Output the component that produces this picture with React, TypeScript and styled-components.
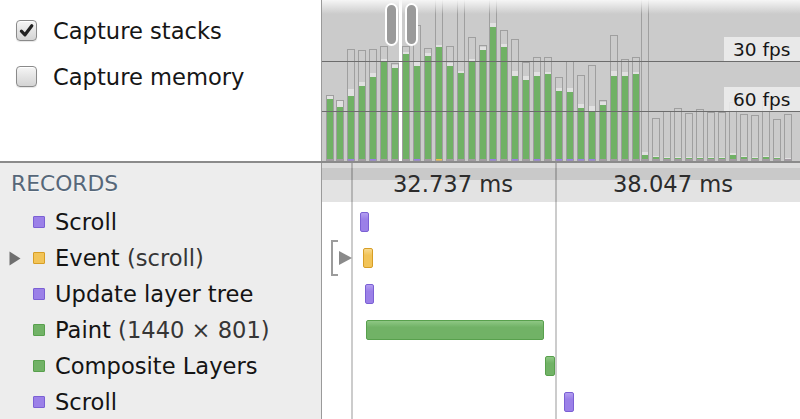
import React from "react";
import styled, { createGlobalStyle } from "styled-components";

const Global = createGlobalStyle`
  html, body { margin: 0; padding: 0; background: #fff; }
  body { font-family: "DejaVu Sans", "Noto Sans", sans-serif; overflow: hidden; }
  * { box-sizing: border-box; }
`;

const Root = styled.div`
  width: 800px;
  height: 419px;
  display: flex;
  flex-direction: column;
  overflow: hidden;
`;

const TopSection = styled.div`
  flex: none;
  height: 163px;
  display: flex;
  border-bottom: 2px solid #8b8b8b;
`;

const OptionsPanel = styled.div`
  width: 322px;
  flex: none;
  background: #fff;
  border-right: 1px solid #9a9a9a;
  padding: 7px 0 0 16px;
  display: flex;
  flex-direction: column;
`;

const OptionRow = styled.div`
  height: 46px;
  display: flex;
  align-items: center;
  gap: 16px;
  font-size: 22.6px;
  line-height: 26px;
  color: #161616;
`;

const OptionText = styled.span`
  padding-top: 2px;
`;

const CheckBox = styled.span<{ $checked?: boolean }>`
  width: 21px;
  height: 21px;
  border: 1px solid #8a8a8a;
  border-radius: 4px;
  background: linear-gradient(to bottom, #f6f6f6 0%, #e4e4e4 50%, #d4d4d4 100%);
  box-shadow: inset 0 1px 0 #fff, 0 1px 1px rgba(0, 0, 0, 0.1);
  display: flex;
  align-items: center;
  justify-content: center;
  flex: none;
`;

const Overview = styled.div`
  flex: 1;
  position: relative;
  background: #cbcbcb;
  overflow: hidden;
`;

const ChartSvg = styled.svg`
  display: block;
`;

const TopFade = styled.div`
  position: absolute;
  left: 0;
  right: 0;
  top: 0;
  height: 14px;
  background: linear-gradient(to bottom, rgba(248, 248, 248, 0.95), rgba(248, 248, 248, 0));
`;

const FpsLabel = styled.div<{ $top: number }>`
  position: absolute;
  right: 0;
  top: ${(p) => p.$top}px;
  width: 76px;
  height: 24px;
  padding: 2px 0 0 9px;
  background: rgba(238, 238, 238, 0.85);
  font-size: 18.5px;
  line-height: 22px;
  color: #161616;
`;

const Handle = styled.div<{ $left: number }>`
  position: absolute;
  top: 3px;
  left: ${(p) => p.$left}px;
  width: 13px;
  height: 43px;
  background: #9a9a9a;
  border: 2px solid #fff;
  border-radius: 7px;
`;

const BottomSection = styled.div`
  flex: 1;
  display: flex;
  min-height: 0;
`;

const Sidebar = styled.div`
  width: 322px;
  flex: none;
  background: #ededed;
  border-right: 1px solid #9a9a9a;
  display: flex;
  flex-direction: column;
`;

const SidebarHeader = styled.div`
  height: 41px;
  padding: 2px 0 0 11px;
  display: flex;
  align-items: center;
  font-size: 21.8px;
  color: #566779;
  text-shadow: 0 1px 0 rgba(255, 255, 255, 0.6);
`;

const RecordList = styled.div`
  padding-top: 1px;
`;

const RecordRow = styled.div`
  height: 36px;
  display: flex;
  align-items: center;
  padding: 2px 0 0 9px;
  font-size: 22.6px;
  line-height: 26px;
  white-space: nowrap;
`;

const ToggleSlot = styled.span`
  width: 24px;
  flex: none;
  display: flex;
  align-items: center;
`;

const palette = {
  purple: { border: "#7b60d4", base: "#9b80e8", light: "#b39ef1" },
  yellow: { border: "#d79e26", base: "#f2c458", light: "#f8d98e" },
  green: { border: "#58a04d", base: "#71b266", light: "#8ec784" },
};
type Cat = keyof typeof palette;

const Swatch = styled.span<{ $cat: Cat }>`
  width: 12px;
  height: 12px;
  flex: none;
  margin-right: 10px;
  border: 1px solid ${(p) => palette[p.$cat].border};
  background: ${(p) => palette[p.$cat].base};
  border-radius: 1px;
`;

const Title = styled.span`
  color: #141414;
`;

const Detail = styled.span`
  color: #363636;
  margin-left: 0.318em;
`;

const TimelinePane = styled.div`
  flex: 1;
  position: relative;
  background: #fff;
`;

const TimeHeader = styled.div`
  position: relative;
  height: 39px;
  background: linear-gradient(
    to bottom,
    #dcdcdc 0px,
    #dcdcdc 5px,
    #c9c9c9 5px,
    #c9c9c9 17px,
    #e3e3e3 17px,
    #e3e3e3 39px
  );
`;

const AxisLabel = styled.span`
  position: absolute;
  top: 2px;
  font-size: 22.6px;
  line-height: 39px;
  color: #2c2c2c;
  white-space: nowrap;
`;

const GridLine = styled.div`
  position: absolute;
  top: 0;
  bottom: 0;
  width: 2px;
  background: rgba(0, 0, 0, 0.2);
`;

const Tracks = styled.div`
  padding-top: 2px;
`;

const TrackRow = styled.div`
  position: relative;
  height: 36px;
`;

const RecordBar = styled.div<{ $cat: Cat }>`
  position: absolute;
  top: 8px;
  height: 20px;
  border: 1px solid ${(p) => palette[p.$cat].border};
  border-radius: 2px;
  background: linear-gradient(
    to bottom,
    ${(p) => palette[p.$cat].light} 0%,
    ${(p) => palette[p.$cat].base} 35%,
    ${(p) => palette[p.$cat].base} 100%
  );
`;

const Bracket = styled.svg`
  position: absolute;
  left: 9px;
  top: 0;
`;

type Strip = "p" | "y" | "g";
// [x, outlineTop, lightTop, greenTop, strip]
const frames: [number, number, number, number, Strip][] = [
  [4, 95, 95, 99, "g"],
  [14, 100, 100, 107, "g"],
  [25, 49, 89, 96, "p"],
  [36, 50, 82, 86, "g"],
  [47, 49, 73, 77, "p"],
  [58, 46, 59, 62, "g"],
  [69, 63, 65, 68, "g"],
  [80, 46, 52, 54, "g"],
  [91, 25, 62, 66, "p"],
  [102, 48, 53, 56, "g"],
  [113, -2, 45, 47, "y"],
  [124, 46, 63, 66, "g"],
  [135, -2, 71, 73, "g"],
  [146, 37, 59, 62, "g"],
  [157, 45, 47, 50, "g"],
  [167, -2, 23, 27, "p"],
  [178, 30, 44, 47, "g"],
  [189, 39, 71, 76, "p"],
  [200, 62, 76, 80, "g"],
  [211, 57, 72, 76, "p"],
  [222, 57, 72, 74, "g"],
  [233, 77, 88, 91, "p"],
  [244, 61, 88, 92, "p"],
  [255, 75, 104, 108, "p"],
  [266, 65, 106, 112, "p"],
  [277, 100, 102, 105, "g"],
  [288, 35, 71, 76, "g"],
  [299, 59, 72, 76, "g"],
  [310, 57, 72, 74, "g"],
  [319, -2, 152, 155, "g"],
  [330, 118, 156, 157, "g"],
  [341, 111, 157, 158, "g"],
  [352, 108, 157, 158, "g"],
  [363, 113, 157, 158, "g"],
  [374, 109, 157, 158, "g"],
  [385, 112, 157, 158, "g"],
  [396, 112, 157, 158, "g"],
  [407, 102, 153, 155, "g"],
  [418, 114, 156, 157, "g"],
  [429, 115, 157, 158, "g"],
  [440, 101, 156, 157, "g"],
  [451, 119, 157, 158, "g"],
  [462, 114, 158, 159, "g"],
];

const stripColor: Record<Strip, string> = { p: "#9a7fe4", y: "#f0bf4c", g: "#a49aa4" };

const records: { cat: Cat; title: string; detail?: string; expandable?: boolean; left: number; width: number }[] = [
  { cat: "purple", title: "Scroll", left: 38, width: 9 },
  { cat: "yellow", title: "Event", detail: "(scroll)", expandable: true, left: 41, width: 10 },
  { cat: "purple", title: "Update layer tree", left: 43, width: 9 },
  { cat: "green", title: "Paint", detail: "(1440 × 801)", left: 44, width: 178 },
  { cat: "green", title: "Composite Layers", left: 223, width: 10 },
  { cat: "purple", title: "Scroll", left: 242, width: 10 },
];

const FrameChart = () => {
  const bottom = 161;
  return (
    <ChartSvg width={478} height={161} viewBox="0 0 478 161">
      <rect x={77} y={0} width={3} height={161} fill="#ffffff" />
      {frames.map(([x, out, light, green, strip], i) => (
        <g key={i}>
          <rect x={x + 1} y={light} width={6} height={green - light} fill="#e1e1e1" />
          <rect x={x + 1} y={green} width={6} height={bottom - 2 - green} fill="#70b165" />
          <rect x={x + 1} y={bottom - 2} width={6} height={2} fill={stripColor[strip]} />
          <rect
            x={x + 0.5}
            y={out + 0.5}
            width={7}
            height={bottom - out - 0.5}
            fill="none"
            stroke="#9f9f9f"
            strokeWidth={1}
          />
        </g>
      ))}
      <line x1={0} x2={478} y1={61.5} y2={61.5} stroke="#6c6c6c" strokeWidth={1} />
      <line x1={0} x2={478} y1={111.5} y2={111.5} stroke="#6c6c6c" strokeWidth={1} />
    </ChartSvg>
  );
};

const Check = () => (
  <svg width={17} height={17} viewBox="0 0 17 17">
    <path
      d="M3.4 9.2 L7 12.8 L13.8 3.8"
      fill="none"
      stroke="#222"
      strokeWidth={3.2}
      strokeLinecap="round"
      strokeLinejoin="round"
    />
  </svg>
);

const Disclosure = () => (
  <svg width={12} height={15} viewBox="0 0 12 15">
    <polygon points="0.5,0.5 11.5,7.5 0.5,14.5" fill="#6f6f6f" />
  </svg>
);

export default function App() {
  return (
    <Root>
      <Global />
      <TopSection>
        <OptionsPanel>
          <OptionRow>
            <CheckBox $checked>
              <Check />
            </CheckBox>
            <OptionText>Capture stacks</OptionText>
          </OptionRow>
          <OptionRow>
            <CheckBox />
            <OptionText>Capture memory</OptionText>
          </OptionRow>
        </OptionsPanel>
        <Overview>
          <FrameChart />
          <TopFade />
          <FpsLabel $top={37}>30 fps</FpsLabel>
          <FpsLabel $top={87}>60 fps</FpsLabel>
          <Handle $left={63} />
          <Handle $left={83} />
        </Overview>
      </TopSection>
      <BottomSection>
        <Sidebar>
          <SidebarHeader>RECORDS</SidebarHeader>
          <RecordList>
            {records.map((r, i) => (
              <RecordRow key={i}>
                <ToggleSlot>{r.expandable && <Disclosure />}</ToggleSlot>
                <Swatch $cat={r.cat} />
                <Title>{r.title}</Title>
                {r.detail && <Detail>{r.detail}</Detail>}
              </RecordRow>
            ))}
          </RecordList>
        </Sidebar>
        <TimelinePane>
          <TimeHeader>
            <AxisLabel style={{ left: 71 }}>32.737 ms</AxisLabel>
            <AxisLabel style={{ left: 291 }}>38.047 ms</AxisLabel>
          </TimeHeader>
          <GridLine style={{ left: 29 }} />
          <GridLine style={{ left: 233 }} />
          <Tracks>
            {records.map((r, i) => (
              <TrackRow key={i}>
                {r.expandable && (
                  <Bracket width={22} height={36} viewBox="0 0 22 36">
                    <path d="M7 1 H1 V35 H7" fill="none" stroke="#9c9c9c" strokeWidth={2} />
                    <polygon points="8,11 21,18 8,25" fill="#8a8a8a" />
                  </Bracket>
                )}
                <RecordBar $cat={r.cat} style={{ left: r.left, width: r.width }} />
              </TrackRow>
            ))}
          </Tracks>
        </TimelinePane>
      </BottomSection>
    </Root>
  );
}
